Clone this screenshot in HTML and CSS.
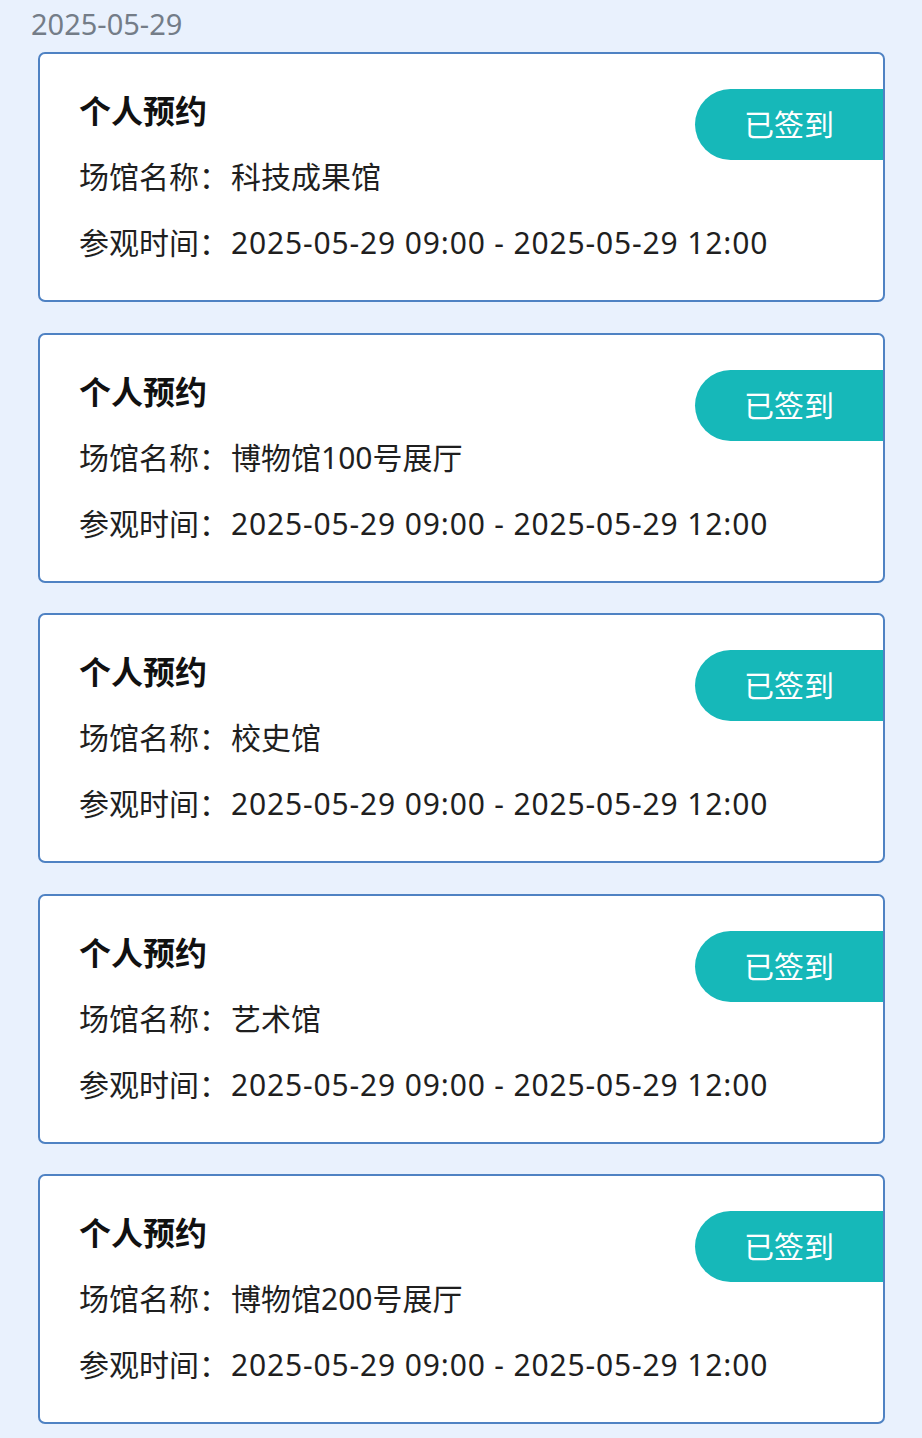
FILE: index.html
```html
<!DOCTYPE html>
<html lang="zh-CN">
<head>
<meta charset="utf-8">
<link rel="stylesheet" href="styles.css">
</head>
<body>
<div class="date">2025-05-29</div>
<div class="list">
  <div class="card">
    <div class="title">个人预约</div>
    <div class="row"><span class="label">场馆名称：</span><span class="value">科技成果馆</span></div>
    <div class="row"><span class="label">参观时间：</span><span class="value time">2025-05-29 09:00 - 2025-05-29 12:00</span></div>
    <div class="badge">已签到</div>
  </div>
  <div class="card">
    <div class="title">个人预约</div>
    <div class="row"><span class="label">场馆名称：</span><span class="value">博物馆100号展厅</span></div>
    <div class="row"><span class="label">参观时间：</span><span class="value time">2025-05-29 09:00 - 2025-05-29 12:00</span></div>
    <div class="badge">已签到</div>
  </div>
  <div class="card">
    <div class="title">个人预约</div>
    <div class="row"><span class="label">场馆名称：</span><span class="value">校史馆</span></div>
    <div class="row"><span class="label">参观时间：</span><span class="value time">2025-05-29 09:00 - 2025-05-29 12:00</span></div>
    <div class="badge">已签到</div>
  </div>
  <div class="card">
    <div class="title">个人预约</div>
    <div class="row"><span class="label">场馆名称：</span><span class="value">艺术馆</span></div>
    <div class="row"><span class="label">参观时间：</span><span class="value time">2025-05-29 09:00 - 2025-05-29 12:00</span></div>
    <div class="badge">已签到</div>
  </div>
  <div class="card">
    <div class="title">个人预约</div>
    <div class="row"><span class="label">场馆名称：</span><span class="value">博物馆200号展厅</span></div>
    <div class="row"><span class="label">参观时间：</span><span class="value time">2025-05-29 09:00 - 2025-05-29 12:00</span></div>
    <div class="badge">已签到</div>
  </div>
</div>
</body>
</html>
```
FILE: styles.css
```css
html, body {
  margin: 0;
  padding: 0;
}
body {
  background: #e9f1fd;
  font-family: "Noto Sans", "Noto Sans CJK SC", sans-serif;
  color: #1a1a1a;
  min-height: 1438px;
}
.date {
  padding: 4px 0 0 31px;
  height: 48px;
  font-size: 29px;
  line-height: 40px;
  color: #747d88;
}
.list {
  display: flex;
  flex-direction: column;
  gap: 30.5px;
  padding-left: 38px;
}
.card {
  position: relative;
  box-sizing: border-box;
  width: 847px;
  height: 250px;
  background: #fff;
  border: 2px solid #4f82c3;
  border-radius: 7px;
  padding: 24px 0 24px 39px;
}
.title {
  font-size: 32px;
  font-weight: 700;
  line-height: 66px;
  color: #111;
}
.row {
  display: flex;
  font-size: 30px;
  line-height: 66px;
  color: #1f1f1f;
}
.label {
  width: 152px;
  flex: none;
}
.time {
  letter-spacing: 0.85px;
}
.badge {
  position: absolute;
  top: 35px;
  right: 0;
  width: 188px;
  height: 71px;
  border-radius: 36px 0 0 36px;
  background: #16b8b9;
  color: #fff;
  font-size: 30px;
  line-height: 71px;
  text-align: center;
}
```
